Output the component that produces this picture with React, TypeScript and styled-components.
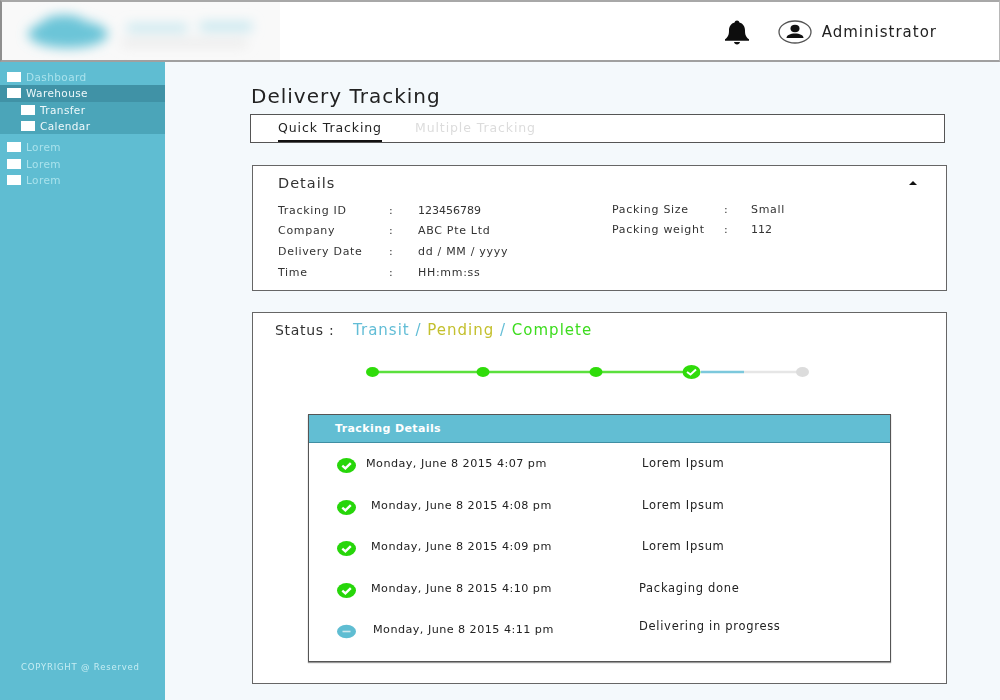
import React, { FunctionComponent } from 'react';
import styled, { createGlobalStyle } from 'styled-components';

const GlobalStyle = createGlobalStyle`
    html, body {
        margin: 0;
        padding: 0;
        background: #f4f9fc;
    }
    body {
        font-family: "DejaVu Sans", Inter, sans-serif;
        color: #1f1f1f;
    }
`;

const Page = styled.div`
    width: 1000px;
    height: 700px;
    display: flex;
    flex-direction: column;
    overflow: hidden;
    filter: blur(0.35px);
`;

const Header = styled.header`
    height: 62px;
    box-sizing: border-box;
    flex: none;
    display: flex;
    align-items: center;
    justify-content: space-between;
    background: #fff;
    border-top: 2px solid #a8a8a8;
    border-bottom: 2px solid #a0a0a0;
    border-left: 2px solid #8f8f8f;
    border-right: 1px solid #b8b8b8;
`;

const Logo = styled.svg`
    width: 278px;
    height: 58px;
    display: block;
`;

const HeaderRight = styled.div`
    display: flex;
    align-items: center;
    padding: 1px 62px 0 0;
`;

const BellIcon = styled.svg`
    width: 28px;
    height: 26px;
    margin-right: 27px;
`;

const UserIcon = styled.svg`
    width: 34px;
    height: 24px;
    margin-right: 10px;
`;

const UserName = styled.span`
    font-size: 15px;
    letter-spacing: 1px;
    color: #222;
`;

const Body = styled.div`
    flex: 1;
    display: flex;
    min-height: 0;
`;

const Sidebar = styled.aside`
    width: 165px;
    flex: none;
    display: flex;
    flex-direction: column;
    background: #5fbdd2;
    padding-top: 7px;
    box-sizing: border-box;
`;

const MenuRow = styled.div<{ $active?: boolean; $sub?: boolean }>`
    height: 16.3px;
    display: flex;
    align-items: center;
    gap: 5px;
    padding-left: ${({ $sub }) => ($sub ? '21px' : '7px')};
    font-size: 10.5px;
    letter-spacing: 0.4px;
    color: ${({ $active, $sub }) => ($active || $sub ? '#eef9fb' : '#a9e2ec')};
    background: ${({ $active, $sub }) => ($active ? '#4092a6' : $sub ? '#4ba5b9' : 'transparent')};
`;

const MenuGap = styled.div`
    height: 5px;
    flex: none;
`;

const MenuBox = styled.span`
    width: 14px;
    height: 10px;
    background: #fff;
    flex: none;
`;

const Copyright = styled.div`
    margin-top: auto;
    padding: 0 0 28px 21px;
    font-size: 8.5px;
    letter-spacing: 0.8px;
    white-space: nowrap;
    color: #c6edf3;
`;

const Main = styled.main`
    flex: 1;
    padding: 0 54px 0 85px;
    min-width: 0;
`;

const Title = styled.h1`
    margin: 22px 0 0 1px;
    font-size: 20px;
    line-height: 24px;
    font-weight: 400;
    letter-spacing: 1px;
    color: #222;
`;

const TabBar = styled.div`
    box-sizing: border-box;
    width: 695px;
    height: 29px;
    margin-top: 6px;
    display: flex;
    gap: 33px;
    padding-left: 27px;
    background: #fff;
    border: 1px solid #555;
`;

const Tab = styled.div<{ $active?: boolean }>`
    height: 27px;
    box-sizing: border-box;
    padding-top: 5px;
    font-size: 12.5px;
    line-height: 15px;
    letter-spacing: 0.9px;
    white-space: nowrap;
    color: ${({ $active }) => ($active ? '#222' : '#dcdcdc')};
    border-bottom: 2px solid ${({ $active }) => ($active ? '#111' : 'transparent')};
`;

const DetailsCard = styled.section`
    box-sizing: border-box;
    width: 695px;
    height: 126px;
    margin: 22px 0 0 2px;
    padding: 8px 26px 0 25px;
    background: #fff;
    border: 1px solid #666;
`;

const DetailsHead = styled.div`
    display: flex;
    align-items: center;
    justify-content: space-between;
    height: 17px;
    font-size: 14.5px;
    letter-spacing: 1px;
    color: #333;
`;

const Caret = styled.span`
    width: 0;
    height: 0;
    margin-right: 3px;
    border-left: 4.5px solid transparent;
    border-right: 4.5px solid transparent;
    border-bottom: 4px solid #111;
`;

const DetailsColumns = styled.div`
    display: grid;
    grid-template-columns: 334px 1fr;
    margin-top: 9px;
`;

const InfoList = styled.div<{ $wide?: boolean }>`
    display: grid;
    grid-template-columns: ${({ $wide }) => ($wide ? '112px 27px 1fr' : '111px 29px 1fr')};
    grid-auto-rows: 20.6px;
    align-items: center;
    font-size: 11px;
    letter-spacing: 0.7px;
    white-space: nowrap;
    color: #333;
    margin-top: ${({ $wide }) => ($wide ? '-1px' : '0')};
`;

const Num = styled.span`
    letter-spacing: 0;
`;

const StatusCard = styled.section`
    box-sizing: border-box;
    width: 695px;
    height: 372px;
    margin: 21px 0 0 2px;
    padding: 8px 23px 0 22px;
    background: #fff;
    border: 1px solid #666;
`;

const StatusLine = styled.div`
    display: flex;
    height: 17px;
    align-items: center;
    font-size: 15px;
    letter-spacing: 1px;
`;

const StatusLabel = styled.span`
    width: 78px;
    font-size: 14px;
    letter-spacing: 0.7px;
    white-space: nowrap;
    color: #333;
`;

const StatusWord = styled.span<{ $color: string }>`
    color: ${({ $color }) => $color};
    white-space: pre;
`;

const Progress = styled.svg`
    display: block;
    width: 450px;
    height: 20px;
    margin: 24px 0 0 91px;
`;

const TrackingTable = styled.div`
    box-sizing: border-box;
    width: 583px;
    height: 248px;
    margin: 32px 0 0 33px;
    border: 1px solid #555;
    box-shadow: 0 1px 1px #999;
    display: flex;
    flex-direction: column;
`;

const TableHead = styled.div`
    height: 28px;
    flex: none;
    box-sizing: border-box;
    display: flex;
    align-items: center;
    padding-left: 26px;
    background: #62bed3;
    border-bottom: 1px solid #3f8ea3;
    font-size: 11px;
    letter-spacing: 0.4px;
    font-weight: 700;
    color: #fff;
`;

const TableBody = styled.div`
    padding-top: 10px;
    display: flex;
    flex-direction: column;
`;

const TrackRow = styled.div`
    height: 41.5px;
    display: grid;
    grid-template-columns: 57px 273px 1fr;
    align-items: start;
    color: #222;
`;

const RowIcon = styled.svg`
    width: 19px;
    height: 15px;
    margin: 5px 0 0 28px;
`;

const RowCell = styled.div<{ $left: number; $top: number }>`
    padding-left: ${({ $left }) => $left}px;
    padding-top: ${({ $top }) => $top}px;
    font-size: 11.2px;
    letter-spacing: 0.45px;
    line-height: 15px;
    white-space: nowrap;
`;

const NoteCell = styled(RowCell)`
    font-size: 11.5px;
    letter-spacing: 0.7px;
`;

const CheckIcon: FunctionComponent = () => (
    <RowIcon viewBox="0 0 19 15">
        <ellipse cx="9.5" cy="7.5" rx="9.5" ry="7.5" fill="#27d60a" />
        <path d="M5.3 7.6 L8.4 10.3 L13.8 5.2" fill="none" stroke="#fff" strokeWidth="2.4" />
    </RowIcon>
);

const MinusIcon: FunctionComponent = () => (
    <RowIcon viewBox="0 0 19 15">
        <ellipse cx="9.5" cy="7.5" rx="9.5" ry="6.8" fill="#5fbdd2" />
        <rect x="5.5" y="6.7" width="8" height="1.6" fill="#cfe9ef" />
    </RowIcon>
);

const rows = [
    { time: 'Monday, June 8 2015 4:07 pm', note: 'Lorem Ipsum', left: 0, noteLeft: 3, noteTop: 3, done: true },
    { time: 'Monday, June 8 2015 4:08 pm', note: 'Lorem Ipsum', left: 5, noteLeft: 3, noteTop: 3, done: true },
    { time: 'Monday, June 8 2015 4:09 pm', note: 'Lorem Ipsum', left: 5, noteLeft: 3, noteTop: 3, done: true },
    { time: 'Monday, June 8 2015 4:10 pm', note: 'Packaging done', left: 5, noteLeft: 0, noteTop: 3, done: true },
    { time: 'Monday, June 8 2015 4:11 pm', note: 'Delivering in progress', left: 7, noteLeft: 0, noteTop: 0, done: false },
];

const App: FunctionComponent = () => (
    <Page>
        <GlobalStyle />
        <Header>
            <Logo viewBox="0 0 278 58">
                <defs>
                    <filter id="logoBlur" x="-20%" y="-40%" width="140%" height="180%">
                        <feGaussianBlur stdDeviation="6" />
                    </filter>
                </defs>
                <rect width="278" height="58" fill="#f9f9f9" />
                <g filter="url(#logoBlur)">
                    <ellipse cx="66" cy="32" rx="40" ry="14" fill="#6cc5d8" />
                    <ellipse cx="62" cy="24" rx="24" ry="11" fill="#6cc5d8" />
                    <rect x="125" y="22" width="60" height="8" fill="#c4e6ee" />
                    <rect x="198" y="20" width="52" height="9" fill="#c4e6ee" />
                    <rect x="120" y="38" width="125" height="6" fill="#e6e6e6" />
                </g>
            </Logo>
            <HeaderRight>
                <BellIcon viewBox="0 0 28 26">
                    <path d="M14 1.5c1.3 0 2.2.8 2.400 2 3.700 1 5.600 4 5.600 8 0 4 .8 6.500 4 8.800v1.500H2v-1.500C5.200 18 6 15.500 6 11.500c0-4 1.900-7 5.600-8 .2-1.200 1.100-2 2.400-2z" fill="#0d0d0d" />
                    <path d="M11 23h6c-.3 1.500-1.500 2.500-3 2.500s-2.700-1-3-2.500z" fill="#0d0d0d" />
                </BellIcon>
                <UserIcon viewBox="0 0 34 24">
                    <ellipse cx="17" cy="12" rx="16" ry="11" fill="none" stroke="#555" strokeWidth="1.300" />
                    <ellipse cx="17" cy="8.500" rx="4.500" ry="3.700" fill="#111" />
                    <path d="M8.500 18c0-3 4-4.500 8.500-4.500s8.500 1.500 8.500 4.500z" fill="#111" />
                </UserIcon>
                <UserName>Administrator</UserName>
            </HeaderRight>
        </Header>
        <Body>
            <Sidebar>
                <MenuRow>
                    <MenuBox />
                    Dashboard
                </MenuRow>
                <MenuRow $active>
                    <MenuBox />
                    Warehouse
                </MenuRow>
                <MenuRow $sub>
                    <MenuBox />
                    Transfer
                </MenuRow>
                <MenuRow $sub>
                    <MenuBox />
                    Calendar
                </MenuRow>
                <MenuGap />
                <MenuRow>
                    <MenuBox />
                    Lorem
                </MenuRow>
                <MenuRow>
                    <MenuBox />
                    Lorem
                </MenuRow>
                <MenuRow>
                    <MenuBox />
                    Lorem
                </MenuRow>
                <Copyright>COPYRIGHT @ Reserved</Copyright>
            </Sidebar>
            <Main>
                <Title>Delivery Tracking</Title>
                <TabBar>
                    <Tab $active>Quick Tracking</Tab>
                    <Tab>Multiple Tracking</Tab>
                </TabBar>
                <DetailsCard>
                    <DetailsHead>
                        Details
                        <Caret />
                    </DetailsHead>
                    <DetailsColumns>
                        <InfoList>
                            <span>Tracking ID</span><span>:</span><Num>123456789</Num>
                            <span>Company</span><span>:</span><span>ABC Pte Ltd</span>
                            <span>Delivery Date</span><span>:</span><span>dd / MM / yyyy</span>
                            <span>Time</span><span>:</span><span>HH:mm:ss</span>
                        </InfoList>
                        <InfoList $wide>
                            <span>Packing Size</span><span>:</span><span>Small</span>
                            <span>Packing weight</span><span>:</span><Num>112</Num>
                        </InfoList>
                    </DetailsColumns>
                </DetailsCard>
                <StatusCard>
                    <StatusLine>
                        <StatusLabel>Status :</StatusLabel>
                        <StatusWord $color="#62bdd6">Transit / </StatusWord>
                        <StatusWord $color="#c4c02e">Pending </StatusWord>
                        <StatusWord $color="#62bdd6">/ </StatusWord>
                        <StatusWord $color="#3ddc1e">Complete</StatusWord>
                    </StatusLine>
                    <Progress viewBox="0 0 450 20">
                        <line x1="6" y1="10" x2="325" y2="10" stroke="#5be03d" strokeWidth="2.500" />
                        <line x1="335" y1="10" x2="378" y2="10" stroke="#7cc8dc" strokeWidth="2.500" />
                        <line x1="378" y1="10" x2="436" y2="10" stroke="#e6e6e6" strokeWidth="2.500" />
                        <ellipse cx="6.500" cy="10" rx="6.500" ry="5" fill="#2fdc0a" />
                        <ellipse cx="117" cy="10" rx="6.500" ry="5" fill="#2fdc0a" />
                        <ellipse cx="230" cy="10" rx="6.500" ry="5" fill="#2fdc0a" />
                        <ellipse cx="325.500" cy="10" rx="9" ry="7" fill="#2fdc0a" />
                        <path d="M321 10 L324.500 12.500 L330 7.500" fill="none" stroke="#fff" strokeWidth="2" />
                        <ellipse cx="436.500" cy="10" rx="6.500" ry="5" fill="#dcdcdc" />
                    </Progress>
                    <TrackingTable>
                        <TableHead>Tracking Details</TableHead>
                        <TableBody>
                            {rows.map((row) => (
                                <TrackRow key={row.time}>
                                    {row.done ? <CheckIcon /> : <MinusIcon />}
                                    <RowCell $left={row.left} $top={3}>{row.time}</RowCell>
                                    <NoteCell $left={row.noteLeft} $top={row.noteTop}>{row.note}</NoteCell>
                                </TrackRow>
                            ))}
                        </TableBody>
                    </TrackingTable>
                </StatusCard>
            </Main>
        </Body>
    </Page>
);

export default App;
